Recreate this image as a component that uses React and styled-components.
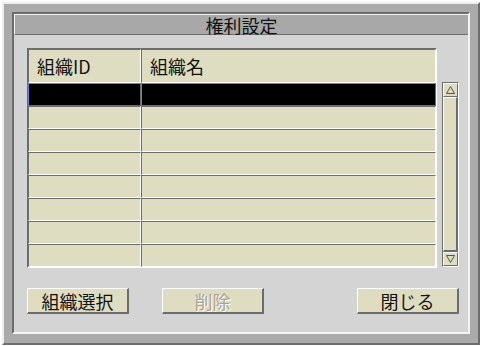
import React from 'react'
import styled, { createGlobalStyle } from 'styled-components'

const GlobalStyle = createGlobalStyle`
  html, body {
    margin: 0;
    padding: 0;
    background: #ffffff;
  }
  body {
    font-family: "Noto Sans CJK JP", "Noto Sans", sans-serif;
  }
`;

const DARK = '#6c6c6c';
const BEIGE = '#dfddc1';

const Window = styled.div`
  box-sizing: border-box;
  margin: 2px 0 0 2px;
  width: 478px;
  height: 343px;
  padding: 8px;
  background: #aaaaaa;
  border: 2px solid;
  border-color: #eeeeee ${DARK} ${DARK} #eeeeee;
`;

const Panel = styled.div`
  box-sizing: border-box;
  width: 458px;
  height: 322px;
  display: flex;
  flex-direction: column;
  border: 2px solid;
  border-color: ${DARK} #f4f4f4 #f4f4f4 ${DARK};
  background: #d4d4d4;
`;

const TitleBar = styled.div`
  box-sizing: border-box;
  height: 21px;
  display: flex;
  align-items: center;
  justify-content: center;
  background: #a8a8a8;
  border-top: 1px solid #f4f4f4;
  border-left: 1px solid #f4f4f4;
  border-bottom: 1px solid ${DARK};
  font-size: 18px;
  line-height: 20px;
  color: #111;
`;

const Body = styled.div`
  flex: 1;
  padding: 13px 0 0 13px;
`;

const ListArea = styled.div`
  display: flex;
  align-items: flex-start;
  gap: 5px;
`;

const Table = styled.div`
  box-sizing: border-box;
  width: 410px;
  flex-shrink: 0;
  border: 1px solid;
  border-color: ${DARK} #ffffff #ffffff ${DARK};
`;

const Row = styled.div`
  display: grid;
  grid-template-columns: 113px 1fr;
  height: ${p => (p.$header ? 34 : 23)}px;
`;

const Cell = styled.div`
  box-sizing: border-box;
  display: flex;
  align-items: center;
  padding-left: 8px;
  background: ${p => (p.$selected ? '#000000' : BEIGE)};
  border: 1px solid;
  border-color: ${p =>
    p.$selected
      ? `#5a86de ${DARK} ${DARK} #5a86de`
      : `${DARK} #ffffff #ffffff ${DARK}`};
  font-size: 18px;
  color: #111;
  white-space: nowrap;
`;

const Scrollbar = styled.div`
  box-sizing: border-box;
  flex-shrink: 0;
  margin-top: 34px;
  width: 17px;
  height: 185px;
  display: flex;
  flex-direction: column;
  border: 1px solid;
  border-color: ${DARK} #ffffff #ffffff ${DARK};
  background: ${BEIGE};
`;

const ArrowButton = styled.div`
  box-sizing: border-box;
  height: 14px;
  display: flex;
  align-items: center;
  justify-content: center;
  background: ${BEIGE};
  border: 1px solid;
  border-color: #ffffff ${DARK} ${DARK} #ffffff;
`;

const Thumb = styled.div`
  box-sizing: border-box;
  flex: 1;
  background: ${BEIGE};
  border: 1px solid;
  border-width: 1px 2px 2px 1px;
  border-color: #ffffff ${DARK} ${DARK} #ffffff;
`;

const ButtonRow = styled.div`
  display: flex;
  width: 432px;
  margin-top: 20px;
`;

const Button = styled.div`
  box-sizing: border-box;
  flex: 0 0 102px;
  width: 102px;
  height: 26px;
  margin-left: ${p => p.$offset || '0'};
  display: flex;
  align-items: center;
  justify-content: center;
  background: ${BEIGE};
  border: solid;
  border-width: 1px 2px 2px 1px;
  border-color: #ffffff ${DARK} ${DARK} #ffffff;
  font-size: 18px;
  color: ${p => (p.$disabled ? '#a4a498' : '#111')};
  text-shadow: ${p => (p.$disabled ? '1px 1px 0 #ffffff' : 'none')};
`;

function Arrow({ down }) {
  return (
    <svg width="9" height="8" viewBox="0 0 9 8">
      <polygon
        points={down ? '0.5,0.5 8.5,0.5 4.5,7.5' : '4.5,0.5 8.5,7.5 0.5,7.5'}
        fill="none"
        stroke="#555"
        strokeWidth="1"
      />
    </svg>
  );
}

const rows = [true, false, false, false, false, false, false, false];

export default function App() {
  return (
    <>
      <GlobalStyle />
      <Window>
        <Panel>
          <TitleBar>権利設定</TitleBar>
          <Body>
            <ListArea>
              <Table>
                <Row $header>
                  <Cell>組織ID</Cell>
                  <Cell>組織名</Cell>
                </Row>
                {rows.map((sel, i) => (
                  <Row key={i}>
                    <Cell $selected={sel} />
                    <Cell $selected={sel} />
                  </Row>
                ))}
              </Table>
              <Scrollbar>
                <ArrowButton>
                  <Arrow />
                </ArrowButton>
                <Thumb />
                <ArrowButton>
                  <Arrow down />
                </ArrowButton>
              </Scrollbar>
            </ListArea>
            <ButtonRow>
              <Button>組織選択</Button>
              <Button $offset="33px" $disabled>削除</Button>
              <Button $offset="auto">閉じる</Button>
            </ButtonRow>
          </Body>
        </Panel>
      </Window>
    </>
  );
}
